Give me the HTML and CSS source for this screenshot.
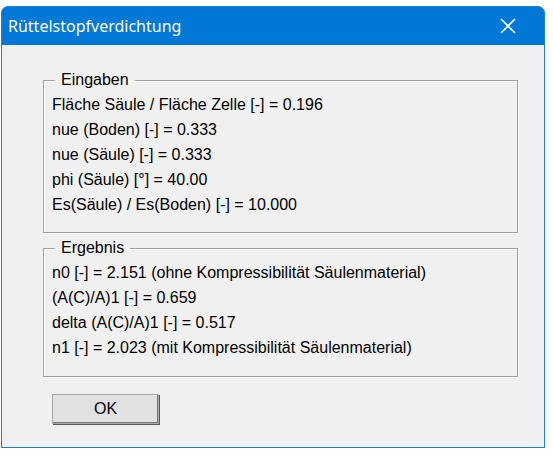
FILE: index.html
```html
<!DOCTYPE html>
<html lang="de">
<head>
<meta charset="utf-8">
<title>Rüttelstopfverdichtung</title>
<link rel="stylesheet" href="styles.css">
</head>
<body>
<div class="window">
  <div class="titlebar">
    <span class="title">Rüttelstopfverdichtung</span>
    <svg class="close" width="16" height="16" viewBox="0 0 16 16"><path d="M1 1 L15 15 M15 1 L1 15" stroke="#fff" stroke-width="1.6" fill="none"/></svg>
  </div>
  <div class="content">
    <fieldset class="group group-in">
      <legend>Eingaben</legend>
      <div class="line">Fläche Säule / Fläche Zelle [-] = 0.196</div>
      <div class="line">nue (Boden) [-] = 0.333</div>
      <div class="line">nue (Säule) [-] = 0.333</div>
      <div class="line">phi (Säule) [°] = 40.00</div>
      <div class="line">Es(Säule) / Es(Boden) [-] = 10.000</div>
    </fieldset>
    <fieldset class="group group-out">
      <legend>Ergebnis</legend>
      <div class="line">n0 [-] = 2.151 (ohne Kompressibilität Säulenmaterial)</div>
      <div class="line">(A(C)/A)1 [-] = 0.659</div>
      <div class="line">delta (A(C)/A)1 [-] = 0.517</div>
      <div class="line">n1 [-] = 2.023 (mit Kompressibilität Säulenmaterial)</div>
    </fieldset>
    <div class="buttons">
      <button class="ok">OK</button>
    </div>
  </div>
</div>
</body>
</html>
```

FILE: styles.css
```css
html, body {
  margin: 0;
  padding: 0;
  background: #ffffff;
}
body {
  width: 553px;
  height: 456px;
  overflow: hidden;
}
.window {
  margin: 6px 0 0 1px;
  width: 544px;
  height: 442px;
  box-sizing: border-box;
  border: 1px solid #1a80d8;
  border-radius: 7px 7px 0 0;
  background: #0078d7;
  display: flex;
  flex-direction: column;
  overflow: hidden;
}
.titlebar {
  height: 38px;
  flex: none;
  display: flex;
  align-items: center;
  justify-content: space-between;
  padding: 0 28px 0 6px;
  background: #0078d7;
}
.title {
  font-family: "Noto Sans", "Open Sans", sans-serif;
  font-size: 16px;
  color: #ffffff;
}
.close {
  display: block;
}
.content {
  flex: 1;
  background: #f0f0f0;
  padding: 25px 26px 0 41px;
  display: flex;
  flex-direction: column;
  font-family: "Liberation Sans", Arial, sans-serif;
  font-size: 16px;
  color: #000;
}
.group {
  margin: 0;
  width: 475px;
  box-sizing: border-box;
  border: 1px solid #a0a0a0;
  box-shadow: 1px 1px 0 #ffffff, inset 1px 1px 0 #ffffff;
  padding: 2px 8px 0 8px;
}
.group legend {
  margin-left: 3px;
  padding: 0 6px;
  line-height: 20px;
}
.group-in {
  height: 163px;
}
.group-out {
  margin-top: 5px;
  height: 139px;
}
.line {
  line-height: 25px;
  white-space: nowrap;
}
.buttons {
  display: flex;
  padding: 17px 0 0 9px;
}
.ok {
  width: 107px;
  height: 30px;
  box-sizing: border-box;
  background: #e1e1e1;
  border: 1px solid #a8a8a8;
  box-shadow: inset -1px -1px 0 #7a7a7a, 1px 1px 0 #5a5a5a;
  font-family: "Liberation Sans", Arial, sans-serif;
  font-size: 16px;
  color: #000;
  padding: 0;
}
```
